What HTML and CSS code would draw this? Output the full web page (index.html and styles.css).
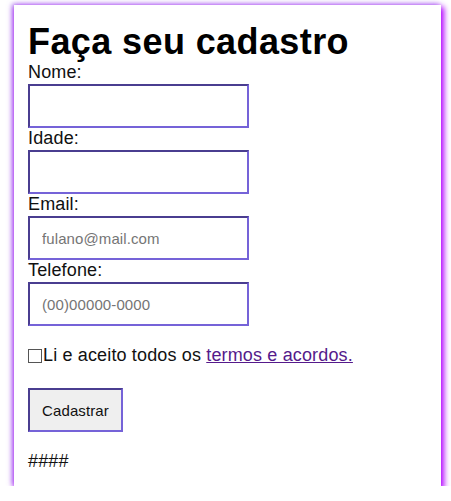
FILE: index.html
```html
<!DOCTYPE html>
<html lang="pt-BR">
<head>
<meta charset="utf-8">
<title>Cadastro</title>
<link rel="stylesheet" href="styles.css">
</head>
<body>
<main class="card">
  <h1 class="title">Faça seu cadastro</h1>
  <form class="form">
    <label class="label" for="nome">Nome:</label>
    <input class="field" id="nome" type="text">
    <label class="label" for="idade">Idade:</label>
    <input class="field" id="idade" type="text">
    <label class="label" for="email">Email:</label>
    <input class="field" id="email" type="text" placeholder="fulano@mail.com">
    <label class="label" for="tel">Telefone:</label>
    <input class="field" id="tel" type="text" placeholder="(00)00000-0000">
    <p class="terms"><span class="box"></span>Li e aceito todos os&nbsp;<a class="link" href="#">termos e acordos.</a></p>
    <button class="btn" type="button">Cadastrar</button>
  </form>
  <p class="hash">####</p>
</main>
</body>
</html>
```

FILE: styles.css
```css
html, body {
  margin: 0;
  padding: 0;
  background: #ffffff;
}
body {
  padding: 5px 10px 0 14px;
  font-family: "Liberation Sans", Arial, sans-serif;
  font-size: 18px;
  letter-spacing: 0.15px;
  color: #111;
}
.card {
  width: 427px;
  height: 481px;
  box-sizing: border-box;
  padding: 16px 14px 0 14px;
  background: #fff;
  box-shadow: 2px 3px 6px 1px #b400ff, -2px -1px 5px rgba(140, 80, 230, 0.7);
}
.title {
  margin: 0;
  font-size: 36px;
  font-weight: bold;
  line-height: 41px;
  letter-spacing: 0.4px;
  color: #000;
}
.form {
  display: flex;
  flex-direction: column;
  align-items: flex-start;
}
.label {
  display: block;
  line-height: 21px;
}
.field {
  width: 221px;
  height: 44px;
  margin-top: 1px;
  box-sizing: border-box;
  border: 2px solid;
  border-color: #4a3d90 #7563d8 #7563d8 #4a3d90;
  padding: 0 12px;
  font-family: "Liberation Sans", Arial, sans-serif;
  font-size: 15px;
  letter-spacing: 0.1px;
  outline: none;
}
.field::placeholder {
  color: #757575;
}
.terms {
  margin: 19px 0 0 0;
  line-height: 21px;
  display: flex;
  align-items: baseline;
}
.box {
  display: inline-block;
  width: 12px;
  height: 12px;
  border: 1px solid #555;
  margin-right: 1px;
  align-self: center;
}
.link {
  color: #551a8b;
}
.btn {
  margin-top: 22px;
  width: 95px;
  height: 44px;
  box-sizing: border-box;
  border: 2px solid;
  border-color: #4a3d90 #7563d8 #7563d8 #4a3d90;
  background: #efefef;
  font-family: "Liberation Sans", Arial, sans-serif;
  font-size: 15px;
  letter-spacing: 0.1px;
  color: #111;
  padding: 0;
}
.hash {
  margin: 19px 0 0 0;
  line-height: 21px;
}
```
